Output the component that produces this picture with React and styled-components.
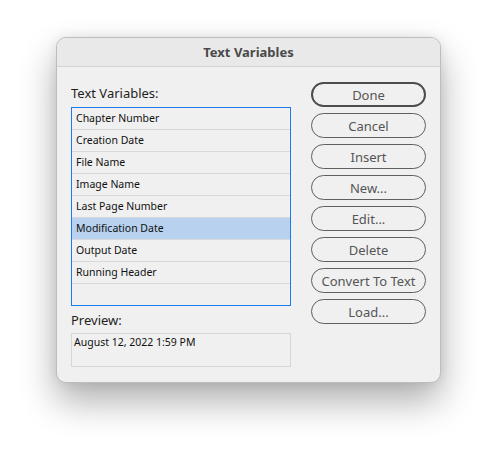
import React, { useState } from "react";
import styled, { createGlobalStyle } from "styled-components";

const GlobalStyle = createGlobalStyle`
  html, body {
    margin: 0;
    padding: 0;
    background: #ffffff;
  }
  body {
    font-family: "Lucida Grande", "Noto Sans", "DejaVu Sans", sans-serif;
  }
`;

const variables = [
  "Chapter Number",
  "Creation Date",
  "File Name",
  "Image Name",
  "Last Page Number",
  "Modification Date",
  "Output Date",
  "Running Header",
];

const buttons = [
  "Done",
  "Cancel",
  "Insert",
  "New...",
  "Edit...",
  "Delete",
  "Convert To Text",
  "Load...",
];

const App = () => {
  const [selected, setSelected] = useState("Modification Date");

  return (
    <Page>
      <GlobalStyle />
      <Dialog>
        <TitleBar>Text Variables</TitleBar>
        <Body>
          <LeftColumn>
            <Label>Text Variables:</Label>
            <List>
              {variables.map((name) => (
                <Row
                  key={name}
                  $active={name === selected}
                  onClick={() => setSelected(name)}
                >
                  {name}
                </Row>
              ))}
              <Row $last />
            </List>
            <PreviewLabel>Preview:</PreviewLabel>
            <PreviewBox>August 12, 2022 1:59 PM</PreviewBox>
          </LeftColumn>
          <ButtonColumn>
            {buttons.map((label) => (
              <Button key={label} $primary={label === "Done"}>
                {label}
              </Button>
            ))}
          </ButtonColumn>
        </Body>
      </Dialog>
    </Page>
  );
};

const Page = styled.div`
  width: 497px;
  height: 458px;
  padding: 37px 0 0 56px;
  box-sizing: border-box;
  background: #ffffff;
`;
const Dialog = styled.div`
  width: 385px;
  height: 346px;
  box-sizing: border-box;
  border: 1px solid #bdbdbd;
  border-radius: 10px;
  background: #f0f0f0;
  overflow: hidden;
  box-shadow: 0 18px 36px rgba(0, 0, 0, 0.32), 0 0 12px rgba(0, 0, 0, 0.08);
`;
const TitleBar = styled.div`
  height: 28px;
  line-height: 28px;
  border-bottom: 1px solid #d2d2d2;
  background: #e9e9e9;
  text-align: center;
  font-size: 13px;
  font-weight: bold;
  color: #4a4a4a;
`;
const Body = styled.div`
  display: flex;
  gap: 20px;
  padding: 15px 14px 0 14px;
`;
const LeftColumn = styled.div`
  width: 220px;
  display: flex;
  flex-direction: column;
`;
const Label = styled.div`
  height: 25px;
  padding-top: 3px;
  box-sizing: border-box;
  font-size: 13px;
  line-height: 16px;
  color: #1e1e1e;
`;
const List = styled.div`
  border: 1px solid #1a7cf0;
  background: #f0f0f0;
`;
const Row = styled.div`
  height: 21px;
  line-height: 20px;
  padding-left: 4px;
  font-size: 10.5px;
  color: #111111;
  background: ${(p) => (p.$active ? "#b7d1ee" : "transparent")};
  border-bottom: ${(p) => (p.$last ? "none" : "1px solid #d9d9d9")};
  cursor: default;
`;
const PreviewLabel = styled.div`
  margin-top: 5px;
  height: 22px;
  line-height: 16px;
  padding-top: 1px;
  box-sizing: border-box;
  font-size: 13px;
  color: #1e1e1e;
`;
const PreviewBox = styled.div`
  height: 34px;
  box-sizing: border-box;
  border: 1px solid #d6d6d6;
  padding: 1px 2px;
  font-size: 10.5px;
  line-height: 14px;
  color: #111111;
`;
const ButtonColumn = styled.div`
  display: flex;
  flex-direction: column;
  gap: 6px;
`;
const Button = styled.button`
  width: 115px;
  height: 25px;
  box-sizing: border-box;
  border: ${(p) => (p.$primary ? "2px solid #4d4d4d" : "1px solid #5f5f5f")};
  border-radius: 13px;
  background: #f0f0f0;
  color: #555555;
  font-family: "Lucida Grande", "Noto Sans", "DejaVu Sans", sans-serif;
  font-size: 13px;
  padding: 0;
  cursor: default;
`;

export default App;
